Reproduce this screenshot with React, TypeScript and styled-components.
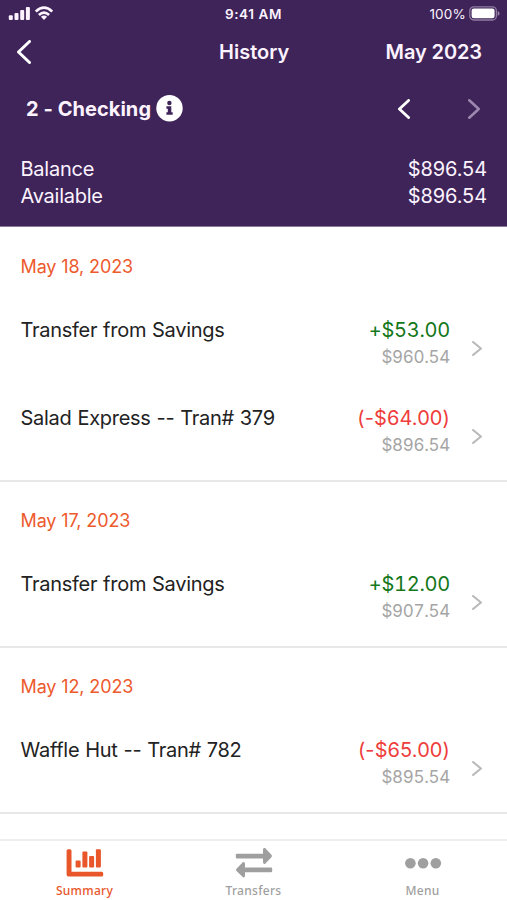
import React from "react";
import styled, { createGlobalStyle } from "styled-components";

const GlobalStyle = createGlobalStyle`
  *, *::before, *::after { box-sizing: border-box; }
  body {
    margin: 0;
    background: #fff;
    font-family: Inter, "Liberation Sans", sans-serif;
  }
  svg { display: block; flex: none; }
`;

const Screen = styled.div`
  display: flex;
  flex-direction: column;
  width: 507px;
  height: 900px;
  overflow: hidden;
  background: #fff;
`;

const Header = styled.header`
  flex: none;
  height: 227px;
  background: #3f2459;
  border-bottom: 1px solid #8d7b9d;
  color: #fcf3ff;
`;

const Triple = styled.div`
  display: grid;
  grid-template-columns: 1fr auto 1fr;
  align-items: center;
`;

const StatusBar = styled(Triple)`
  height: 27px;
  padding: 0 8px;
`;

const StatusIcons = styled.div`
  display: flex;
  gap: 5px;
`;

const Clock = styled.span`
  font-size: 13.5px;
  font-weight: 600;
  letter-spacing: 0.6px;
`;

const Battery = styled.div`
  display: flex;
  justify-content: flex-end;
  align-items: center;
  gap: 3px;
  margin-right: -1px;
  font-size: 13.5px;
  letter-spacing: 0.2px;
`;

const NavBar = styled(Triple)`
  height: 50px;
  padding: 0 25px 0 17px;
  grid-template-columns: 202px 1fr auto;
  font-size: 20px;
  font-weight: 600;
`;

const Title = styled.span`
  font-size: 20px;
`;

const Month = styled.span`
  justify-self: end;
  letter-spacing: -0.1px;
`;

const AccountBar = styled.div`
  display: flex;
  align-items: center;
  height: 63px;
  padding: 0 27px 0 26px;
`;

const AccountName = styled.span`
  margin-right: 5px;
  font-size: 20px;
  font-weight: 700;
  letter-spacing: 0.05px;
`;

const Pager = styled.div`
  display: flex;
  gap: 58px;
  margin-left: auto;
`;

const Balances = styled.dl`
  margin: 0;
  padding: 16px 20px 0 20.5px;
`;

const BalanceLine = styled.div`
  display: flex;
  justify-content: space-between;
  font-size: 20px;
  line-height: 27px;
  letter-spacing: -0.25px;
  dd {
    margin: 0;
    letter-spacing: -0.1px;
  }
`;

const History = styled.main`
  flex: 1;
  min-height: 0;
  overflow: hidden;
  padding-top: 1px;
`;

const Day = styled.section`
  padding: 0 25px 16px 20.5px;
  border-bottom: 2px solid #e8e8e8;
`;

const DayTitle = styled.h2`
  margin: 0;
  height: 60px;
  padding-top: 17px;
  color: #ed5a2d;
  font-size: 18px;
  font-weight: 400;
  line-height: 43px;
  letter-spacing: -0.12px;
`;

const Row = styled.div`
  display: flex;
  height: 88px;
  padding-top: 28px;
`;

const Payee = styled.span`
  flex: 1;
  color: #222;
  font-size: 20px;
  line-height: 28px;
  letter-spacing: -0.27px;
  word-spacing: 0.5px;
`;

const Figures = styled.div`
  display: flex;
  flex-direction: column;
  align-items: flex-end;
  margin-right: 22px;
`;

const Amount = styled.span<{ $credit: boolean }>`
  color: ${(p) => (p.$credit ? "#14771a" : "#ee3d3b")};
  font-size: 20px;
  font-variant-numeric: ${(p) => (p.$credit ? "tabular-nums" : "normal")};
  line-height: 28px;
  letter-spacing: ${(p) => (p.$credit ? "-0.25px" : "0.1px")};
`;

const Running = styled.span`
  color: #a5a5a5;
  font-size: 17px;
  font-variant-numeric: tabular-nums;
  line-height: 26px;
  letter-spacing: -0.3px;
`;

const RowArrow = styled.div`
  padding-top: 25px;
`;

const TabBar = styled.nav`
  display: grid;
  grid-template-columns: repeat(3, 1fr);
  flex: none;
  height: 61px;
  border-top: 2px solid #eee;
`;

const Tab = styled.a<{ $active?: boolean }>`
  display: flex;
  flex-direction: column;
  align-items: center;
  padding-top: 7px;
  color: ${(p) => (p.$active ? "#e8562a" : "#9f9f9f")};
`;

const TabLabel = styled.span`
  margin-top: 4px;
  font-family: "Noto Sans", sans-serif;
  font-size: 12px;
  font-weight: 500;
  line-height: 18px;
  letter-spacing: 0.3px;
`;

interface ChevronProps {
  dir: "left" | "right";
  w: number;
  h: number;
  stroke: number;
  color: string;
}

const Chevron = ({ dir, w, h, stroke, color }: ChevronProps) => {
  const i = stroke / 2;
  const [a, b] = dir === "left" ? [w - i, i] : [i, w - i];
  return (
    <svg width={w} height={h} fill="none" stroke={color} strokeWidth={stroke} strokeLinecap="round" strokeLinejoin="round">
      <path d={`M${a} ${i}L${b} ${h / 2}L${a} ${h - i}`} />
    </svg>
  );
};

const Signal = () => (
  <svg width="22" height="15" fill="#fcf3ff">
    <rect x="0.8" y="9.3" width="4" height="4.7" rx="1" />
    <rect x="6.5" y="7" width="4" height="7" rx="1" />
    <rect x="12.2" y="4" width="4" height="10" rx="1" />
    <rect x="17.9" y="1" width="4" height="13" rx="1" />
  </svg>
);

const Wifi = () => (
  <svg width="18" height="15" fill="none" stroke="#fcf3ff" strokeWidth="2.7">
    <path d="M.8 5.6Q9-2.2 17.2 5.6" />
    <path d="M3.9 9Q9 4.2 14.1 9" />
    <path d="M5.9 10.8Q9 8.2 12.1 10.8L9 14Z" fill="#fcf3ff" stroke="none" />
  </svg>
);

const BatteryIcon = () => (
  <svg width="31" height="15" fill="none">
    <rect x=".8" y=".8" width="26.6" height="13.2" rx="4" stroke="#8f7ca1" strokeWidth="1.3" />
    <rect x="2.6" y="2.6" width="23" height="9.6" rx="2.2" fill="#fff" />
    <path d="M28.7 5v4.8q1.8-.7 1.8-2.4T28.7 5Z" fill="#9a89aa" />
  </svg>
);

const Info = () => (
  <svg width="27" height="27" viewBox="0 0 27 27">
    <circle cx="13.5" cy="13.2" r="13.2" fill="#fff" />
    <g fill="#3f2459">
      <circle cx="13.4" cy="8" r="2.2" />
      <path d="M10.4 11.3h4.9v6h1.4v2.4h-6.3v-2.4h1.4v-3.6h-1.4z" />
    </g>
  </svg>
);

const ChartIcon = () => (
  <svg width="38" height="30" fill="currentColor">
    <path d="M.6 2.7Q.6 1.2 2.1 1.2H4Q5.5 1.2 5.5 2.7V23.8H35.7Q37.2 23.8 37.2 25.3V27Q37.2 28.5 35.7 28.5H3.2Q.6 28.5 .6 25.9Z" />
    <rect x="9.6" y="12.6" width="5" height="7" rx="1" />
    <rect x="16.4" y="3.5" width="5" height="16.1" rx="1" />
    <rect x="23.1" y="8" width="5" height="11.6" rx="1" />
    <rect x="29.9" y="1.2" width="5" height="18.4" rx="1" />
  </svg>
);

const TransferIcon = () => (
  <svg width="38" height="30" fill="currentColor">
    <path d="M2 5.8H28V2Q28-.5 30-.1L36.4 6.8Q37.3 8 36.4 9.3L30 15.9Q28 16.2 28 14V10.4H2Q.8 10.4 .8 9.2V7Q.8 5.8 2 5.8Z" />
    <path d="M36 19.6H10V16Q10 13.6 8 14L1.5 20.7Q.6 21.9 1.5 23.1L8 29.3Q10 29.8 10 27.5V24.2H36Q37.2 24.2 37.2 23V20.8Q37.2 19.6 36 19.6Z" />
  </svg>
);

const DotsIcon = () => (
  <svg width="38" height="30" fill="currentColor">
    <circle cx="6.4" cy="15.2" r="5.3" />
    <circle cx="19.1" cy="15.2" r="5.3" />
    <circle cx="31.8" cy="15.2" r="5.3" />
  </svg>
);

const days = [
  {
    date: "May 18, 2023",
    items: [
      { payee: "Transfer from Savings", amount: "+$53.00", balance: "$960.54", credit: true },
      { payee: "Salad Express -- Tran# 379", amount: "(-$64.00)", balance: "$896.54", credit: false },
    ],
  },
  {
    date: "May 17, 2023",
    items: [{ payee: "Transfer from Savings", amount: "+$12.00", balance: "$907.54", credit: true }],
  },
  {
    date: "May 12, 2023",
    items: [{ payee: "Waffle Hut -- Tran# 782", amount: "(-$65.00)", balance: "$895.54", credit: false }],
  },
];

export default function App() {
  return (
    <Screen>
      <GlobalStyle />
      <Header>
        <StatusBar>
          <StatusIcons>
            <Signal />
            <Wifi />
          </StatusIcons>
          <Clock>9:41 AM</Clock>
          <Battery>
            100%
            <BatteryIcon />
          </Battery>
        </StatusBar>
        <NavBar>
          <Chevron dir="left" w={14} h={24} stroke={3} color="#fff" />
          <Title>History</Title>
          <Month>May 2023</Month>
        </NavBar>
        <AccountBar>
          <AccountName>2 - Checking</AccountName>
          <Info />
          <Pager>
            <Chevron dir="left" w={12} h={20} stroke={2.8} color="#fff" />
            <Chevron dir="right" w={12} h={20} stroke={2.5} color="#9d88af" />
          </Pager>
        </AccountBar>
        <Balances>
          <BalanceLine>
            <dt>Balance</dt>
            <dd>$896.54</dd>
          </BalanceLine>
          <BalanceLine>
            <dt>Available</dt>
            <dd>$896.54</dd>
          </BalanceLine>
        </Balances>
      </Header>
      <History>
        {days.map((day) => (
          <Day key={day.date}>
            <DayTitle>{day.date}</DayTitle>
            {day.items.map((item) => (
              <Row key={item.payee}>
                <Payee>{item.payee}</Payee>
                <Figures>
                  <Amount $credit={item.credit}>{item.amount}</Amount>
                  <Running>{item.balance}</Running>
                </Figures>
                <RowArrow>
                  <Chevron dir="right" w={10} h={15} stroke={2.1} color="#b9b9b9" />
                </RowArrow>
              </Row>
            ))}
          </Day>
        ))}
      </History>
      <TabBar>
        <Tab $active>
          <ChartIcon />
          <TabLabel>Summary</TabLabel>
        </Tab>
        <Tab>
          <TransferIcon />
          <TabLabel>Transfers</TabLabel>
        </Tab>
        <Tab>
          <DotsIcon />
          <TabLabel>Menu</TabLabel>
        </Tab>
      </TabBar>
    </Screen>
  );
}
